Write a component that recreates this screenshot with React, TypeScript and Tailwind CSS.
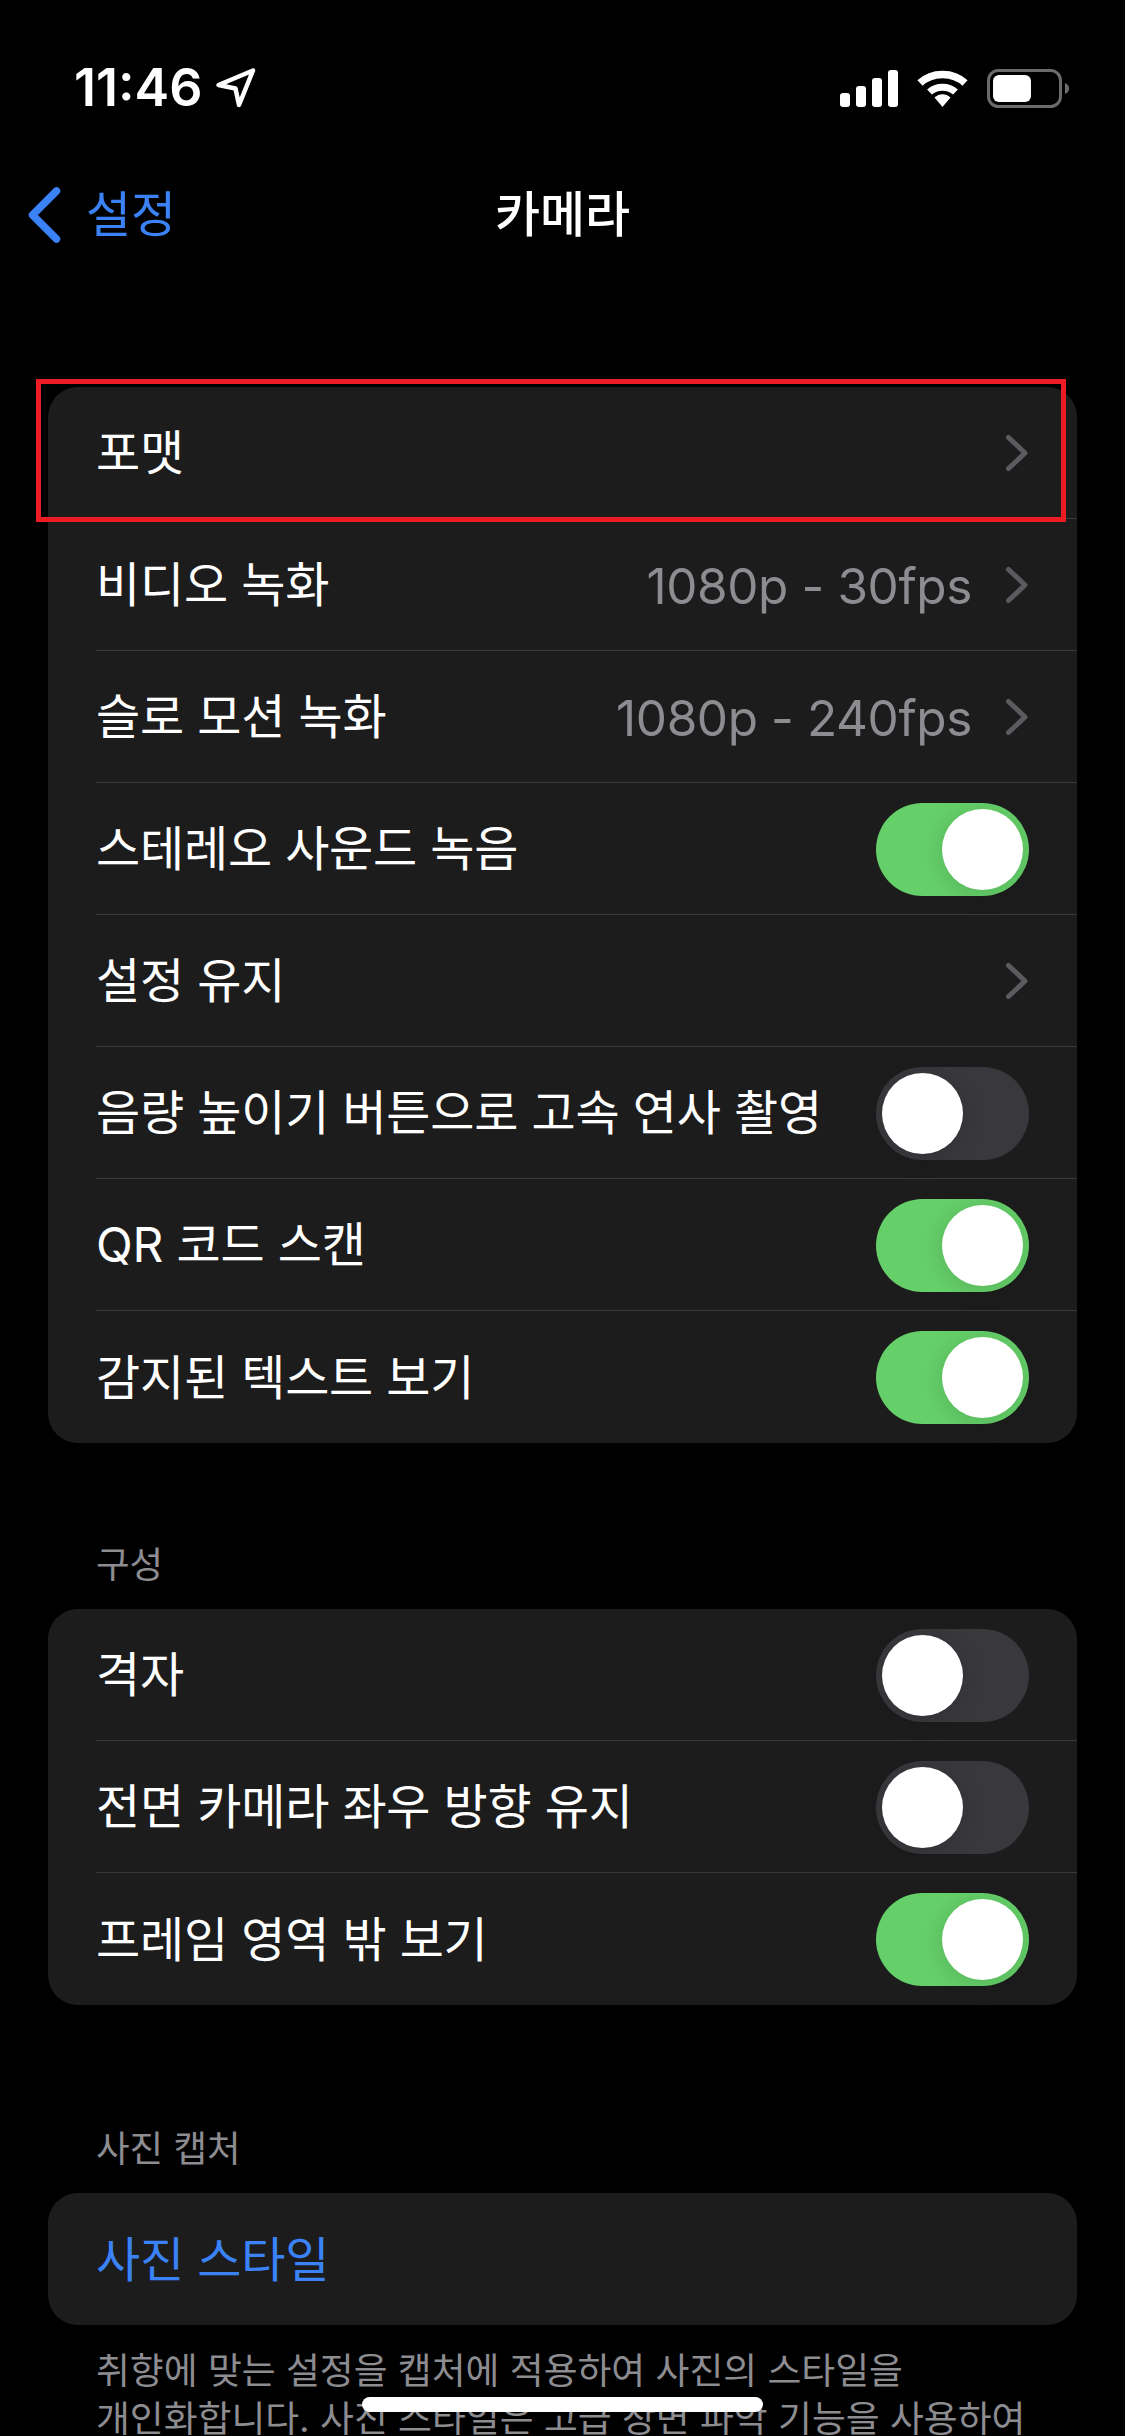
const font = "font-['Inter','Noto_Sans_CJK_KR',sans-serif]";

function Chevron() {
  return (
    <svg width="24" height="40" viewBox="0 0 24 40" className="shrink-0">
      <path d="M3.5 4.5 L20 20 L3.5 35.5" fill="none" stroke="#5b5b5f" strokeWidth="5" strokeLinecap="round" strokeLinejoin="round" />
    </svg>
  );
}

function Toggle({ on }: { on: boolean }) {
  return (
    <div className={`flex h-[93px] w-[153px] shrink-0 items-center rounded-full p-[6px] ${on ? "justify-end bg-[#65d069]" : "justify-start bg-[#39393d]"}`}>
      <div className="h-[81px] w-[81px] rounded-full bg-white shadow-[0_3px_24px_rgba(0,0,0,0.15)]" />
    </div>
  );
}

function Row({ label, value, chevron, toggle, last }: { label: string; value?: string; chevron?: boolean; toggle?: boolean; last?: boolean }) {
  return (
    <div className="flex h-[132px] pl-[48px]">
      <div className={`flex flex-1 items-center justify-between pr-[48px] pt-[1px] ${last ? "" : "border-b border-[#39393b]"}`}>
        <span className="text-[48px] tracking-[-0.2px] text-white">{label}</span>
        {toggle !== undefined && <Toggle on={toggle} />}
        {chevron && (
          <div className="flex items-center gap-[33px]">
            {value && <span className="pt-[2px] text-[49.5px] font-normal tracking-[-0.4px] text-[#8c8c91]">{value}</span>}
            <Chevron />
          </div>
        )}
      </div>
    </div>
  );
}

function Card({ children, className = "" }: { children: React.ReactNode; className?: string }) {
  return <div className={`mx-[48px] overflow-hidden rounded-[30px] bg-[#1c1c1c] ${className}`}>{children}</div>;
}

function Header({ children, className = "" }: { children: React.ReactNode; className?: string }) {
  return <div className={`px-[96px] text-[36.5px] leading-[44px] text-[#8c8c91] ${className}`}>{children}</div>;
}

function StatusIcons() {
  return (
    <div className="flex items-center">
      <svg width="58" height="37" viewBox="0 0 58 37" fill="#fff">
        <rect x="0" y="23" width="10" height="14" rx="3" />
        <rect x="16" y="16" width="10" height="21" rx="3" />
        <rect x="32" y="8" width="10" height="29" rx="3" />
        <rect x="48" y="0" width="10" height="37" rx="3" />
      </svg>
      <svg width="51" height="37" viewBox="0 0 51 37" className="ml-[19px]">
        <path d="M3 13 C15 1.5 36 1.5 48 13" fill="none" stroke="#fff" strokeWidth="7.5" strokeLinecap="butt" />
        <path d="M12.5 22 C19.5 15.5 31.5 15.5 38.5 22" fill="none" stroke="#fff" strokeWidth="7" />
        <path d="M17.5 27.5 C22 23 29 23 33.5 27.5 L25.5 37 Z" fill="#fff" />
      </svg>
      <svg width="82" height="39" viewBox="0 0 82 39" className="ml-[19px]">
        <rect x="1.5" y="1.5" width="72" height="36" rx="10" fill="none" stroke="#6b6b6b" strokeWidth="3" />
        <rect x="6" y="6" width="38" height="27" rx="6" fill="#fff" />
        <path d="M78 14 C81 15 82 17 82 19.5 C82 22 81 24 78 25 Z" fill="#6b6b6b" />
      </svg>
    </div>
  );
}

export default function App() {
  return (
    <div className={`relative h-[2436px] w-[1125px] overflow-hidden bg-black ${font}`}>
      {/* Status bar */}
      <div className="flex h-[176px] items-center justify-between pl-[74px] pr-[56px]">
        <div className="flex items-center gap-[13px]">
          <span className="text-[52px] font-semibold leading-none text-white">11:46</span>
          <svg width="42" height="42" viewBox="0 0 42 42">
            <path d="M3.5 18 L38 3.5 L24 38 L20.5 21.5 Z" fill="none" stroke="#fff" strokeWidth="4.5" strokeLinejoin="round" />
          </svg>
        </div>
        <StatusIcons />
      </div>

      {/* Nav bar */}
      <div className="relative flex h-[78px] items-center justify-center">
        <div className="absolute left-[28px] flex items-center gap-[25px]">
          <svg width="33" height="56" viewBox="0 0 33 56">
            <path d="M28.5 4 L4.5 28 L28.5 52" fill="none" stroke="#3a82f6" strokeWidth="7.5" strokeLinecap="round" strokeLinejoin="round" />
          </svg>
          <span className="text-[49px] text-[#3a82f6]">설정</span>
        </div>
        <span className="text-[49px] font-medium text-white">카메라</span>
      </div>

      {/* Main group */}
      <Card className="mt-[133px]">
        <Row label="포맷" chevron />
        <Row label="비디오 녹화" value="1080p - 30fps" chevron />
        <Row label="슬로 모션 녹화" value="1080p - 240fps" chevron />
        <Row label="스테레오 사운드 녹음" toggle />
        <Row label="설정 유지" chevron />
        <Row label="음량 높이기 버튼으로 고속 연사 촬영" toggle={false} />
        <Row label="QR 코드 스캔" toggle />
        <Row label="감지된 텍스트 보기" toggle last />
      </Card>

      <Header className="mt-[100px]">구성</Header>
      <Card className="mt-[22px]">
        <Row label="격자" toggle={false} />
        <Row label="전면 카메라 좌우 방향 유지" toggle={false} />
        <Row label="프레임 영역 밖 보기" toggle last />
      </Card>

      <Header className="mt-[122px]">사진 캡처</Header>
      <Card className="mt-[22px]">
        <div className="flex h-[132px] items-center px-[48px] pt-[1px] text-[48px] tracking-[-0.2px] text-[#3a82f6]">사진 스타일</div>
      </Card>
      <div className="mt-[22px] whitespace-nowrap pl-[96px] text-[36.8px] leading-[48px] text-[#8c8c91]">
        <div>취향에 맞는 설정을 캡처에 적용하여 사진의 스타일을</div>
        <div>개인화합니다. 사진 스타일은 고급 장면 파악 기능을 사용하여</div>
      </div>

      {/* Annotation box */}
      <div className="absolute left-[36px] top-[379px] h-[143px] w-[1030px] border-[5px] border-[#ed1c24]" />
      {/* Home indicator */}
      <div className="absolute left-[362px] top-[2397px] h-[15px] w-[401px] rounded-full bg-white" />
    </div>
  );
}
